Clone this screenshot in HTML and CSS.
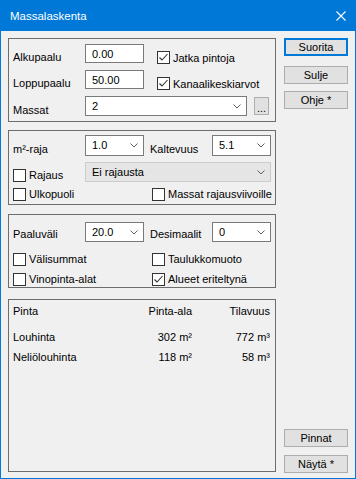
FILE: index.html
```html
<html>
<head>
    <title>Massalaskenta</title>
    <link rel="stylesheet" href="styles.css">
</head>
<body>
    <div class="window">
        <div class="titlebar">
            <span class="title">Massalaskenta</span>
            <svg class="close" width="10" height="10" viewBox="0 0 10 10"><path d="M0.5 0.5L9.5 9.5M9.5 0.5L0.5 9.5" stroke="#fff" stroke-width="1.1"/></svg>
        </div>
        <div class="content">
            <div class="left">
                <div class="group g1">
                    <div class="row h19">
                        <span class="label">Alkupaalu</span>
                        <input class="field w59" value="0.00">
                        <span class="check low ml13"><span class="box"><svg width="11" height="11" viewBox="0 0 11 11"><path d="M1.5 5.5L4 8L9.5 2" fill="none" stroke="#333" stroke-width="1.1"/></svg></span>Jatka pintoja</span>
                    </div>
                    <div class="row h19">
                        <span class="label">Loppupaalu</span>
                        <input class="field w59" value="50.00">
                        <span class="check low ml13"><span class="box"><svg width="11" height="11" viewBox="0 0 11 11"><path d="M1.5 5.5L4 8L9.5 2" fill="none" stroke="#333" stroke-width="1.1"/></svg></span>Kanaalikeskiarvot</span>
                    </div>
                    <div class="row h20">
                        <span class="label">Massat</span>
                        <div class="select w162"><span>2</span><svg width="8" height="5" viewBox="0 0 8 5"><path d="M0.5 0.5L4 4L7.5 0.5" fill="none" stroke="#606060"/></svg></div>
                        <span class="dots">...</span>
                    </div>
                </div>

                <div class="group g2">
                    <div class="row h21">
                        <span class="label">m²-raja</span>
                        <div class="select w59"><span>1.0</span><svg width="8" height="5" viewBox="0 0 8 5"><path d="M0.5 0.5L4 4L7.5 0.5" fill="none" stroke="#606060"/></svg></div>
                        <span class="label second">Kaltevuus</span>
                        <div class="select w59"><span>5.1</span><svg width="8" height="5" viewBox="0 0 8 5"><path d="M0.5 0.5L4 4L7.5 0.5" fill="none" stroke="#606060"/></svg></div>
                    </div>
                    <div class="row h20 mt6">
                        <span class="check cw72 low2"><span class="box"></span>Rajaus</span>
                        <div class="select disabled w186"><span>Ei rajausta</span><svg width="8" height="5" viewBox="0 0 8 5"><path d="M0.5 0.5L4 4L7.5 0.5" fill="none" stroke="#606060"/></svg></div>
                    </div>
                    <div class="row h14 mt5">
                        <span class="check cw139"><span class="box"></span>Ulkopuoli</span>
                        <span class="check"><span class="box"></span>Massat rajausviivoille</span>
                    </div>
                </div>

                <div class="group g3">
                    <div class="row h20">
                        <span class="label low1">Paaluväli</span>
                        <div class="select w59"><span>20.0</span><svg width="8" height="5" viewBox="0 0 8 5"><path d="M0.5 0.5L4 4L7.5 0.5" fill="none" stroke="#606060"/></svg></div>
                        <span class="label second low1">Desimaalit</span>
                        <div class="select w59"><span>0</span><svg width="8" height="5" viewBox="0 0 8 5"><path d="M0.5 0.5L4 4L7.5 0.5" fill="none" stroke="#606060"/></svg></div>
                    </div>
                    <div class="row h14 mt10">
                        <span class="check cw139"><span class="box"></span>Välisummat</span>
                        <span class="check"><span class="box"></span>Taulukkomuoto</span>
                    </div>
                    <div class="row h14 mt6">
                        <span class="check cw139"><span class="box"></span>Vinopinta-alat</span>
                        <span class="check"><span class="box"><svg width="11" height="11" viewBox="0 0 11 11"><path d="M1.5 5.5L4 8L9.5 2" fill="none" stroke="#333" stroke-width="1.1"/></svg></span>Alueet eriteltynä</span>
                    </div>
                </div>

                <div class="group g4">
                    <div class="results">
                        <span>Pinta</span><span class="num">Pinta-ala</span><span class="num">Tilavuus</span>
                        <span>Louhinta</span><span class="num">302 m²</span><span class="num">772 m³</span>
                        <span>Neliölouhinta</span><span class="num">118 m²</span><span class="num">58 m³</span>
                    </div>
                </div>
            </div>

            <div class="right">
                <button class="btn default">Suorita</button>
                <button class="btn sulje">Sulje</button>
                <button class="btn">Ohje *</button>
                <button class="btn pinnat">Pinnat</button>
                <button class="btn nayta">Näytä *</button>
            </div>
        </div>
    </div>
</body>
</html>
```

FILE: styles.css
```css
body {
    margin: 0;
    font-family: "Liberation Sans", Arial, sans-serif;
    font-size: 11px;
    color: #000;
}
.window {
    width: 356px;
    height: 479px;
    box-sizing: border-box;
    border: 1px solid #0078d7;
    border-top: none;
    background: #f0f0f0;
    display: flex;
    flex-direction: column;
}
.titlebar {
    height: 31px;
    flex-shrink: 0;
    background: #0078d7;
    color: #fff;
    display: flex;
    align-items: center;
    justify-content: space-between;
    padding: 0 9px 0 9px;
}
.title {
    font-size: 11.5px;
}
.content {
    flex: 1;
    display: flex;
    padding: 7px 7px 5px 7px;
}
.left {
    width: 268px;
    flex-shrink: 0;
}
.right {
    width: 64px;
    margin-left: 8px;
    display: flex;
    flex-direction: column;
}

/* group boxes */
.group {
    border: 1px solid #6d6d6d;
    box-sizing: border-box;
    display: flex;
    flex-direction: column;
    padding: 0 4px;
}
.g1 { height: 84px; padding-top: 5px; gap: 7px; margin-bottom: 8px; }
.g2 { height: 75px; padding-top: 4px; margin-bottom: 9px; }
.g3 { height: 74px; padding-top: 7px; margin-bottom: 11px; }
.g4 { height: 173px; padding-top: 4px; }

.row {
    display: flex;
    align-items: center;
}
.h14 { height: 14px; }
.h19 { height: 19px; }
.h20 { height: 20px; }
.h21 { height: 21px; }
.mt5 { margin-top: 5px; }
.mt6 { margin-top: 6px; }
.mt10 { margin-top: 10px; }

.label {
    width: 72px;
    flex-shrink: 0;
    padding-top: 7px;
}
.label.low1 { padding-top: 3px; }
.label.second {
    width: 62px;
    margin-left: 6px;
}

/* inputs and drop-downs */
.field, .select {
    box-sizing: border-box;
    height: 100%;
    border: 1px solid #7a7a7a;
    background: #fff;
    font-family: inherit;
    font-size: 11px;
    color: #000;
}
.field {
    padding: 0 6px;
    outline: none;
}
.select {
    display: flex;
    align-items: center;
    justify-content: space-between;
    padding: 0 5px 1px 6px;
}
.select svg { margin-top: 1px; }
.select.disabled {
    background: #e5e5e5;
    border-color: #cccccc;
}
.w59 { width: 59px; }
.w162 { width: 162px; }
.w186 { width: 186px; }

.dots {
    box-sizing: border-box;
    width: 15px;
    height: 18px;
    margin-left: 7px;
    border: 1px solid #adadad;
    background: #e1e1e1;
    text-align: center;
    line-height: 20px;
}

/* checkboxes */
.check {
    display: flex;
    align-items: center;
    white-space: nowrap;
}
.check.low { padding-top: 8px; }
.check.low2 { padding-top: 6px; }
.ml13 { margin-left: 13px; }
.cw72 { width: 72px; flex-shrink: 0; }
.cw139 { width: 139px; flex-shrink: 0; }
.box {
    box-sizing: border-box;
    width: 13px;
    height: 13px;
    border: 1px solid #333;
    background: #fff;
    margin-right: 3px;
    display: flex;
}

/* results table */
.results {
    display: grid;
    grid-template-columns: 120px 59px 78px;
    grid-template-rows: 14px 26px 20px;
    align-items: end;
    line-height: 14px;
}
.results .num { text-align: right; }

/* buttons */
.btn {
    box-sizing: border-box;
    height: 18px;
    padding: 0;
    border: 1px solid #adadad;
    background: #e1e1e1;
    font-family: inherit;
    font-size: 11px;
    color: #000;
    display: flex;
    align-items: center;
    justify-content: center;
}
.btn.default { border: 2px solid #0078d7; }
.sulje { margin-top: 10px; }
.btn.sulje + .btn { margin-top: 7px; }
.pinnat { margin-top: auto; }
.nayta { margin-top: 8px; }
```
